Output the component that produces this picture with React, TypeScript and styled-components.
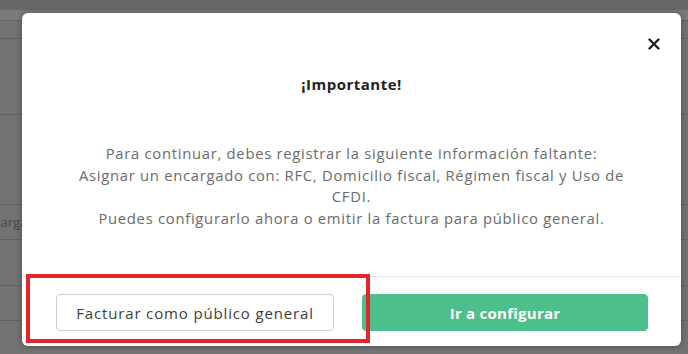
import React from 'react';
import styled, { createGlobalStyle } from 'styled-components';

const GlobalStyle = createGlobalStyle`
  html, body { margin: 0; padding: 0; }
  body { font-family: 'Open Sans', 'Liberation Sans', sans-serif; }
`;

const Page = styled.div`
  position: relative;
  width: 688px;
  height: 354px;
  overflow: hidden;
  background: #737373;
`;

const Backdrop = styled.div`
  display: flex;
  flex-direction: column;
`;

const BgRow = styled.div<{ h: number; tone?: string; plain?: boolean }>`
  height: ${(p) => p.h}px;
  box-sizing: border-box;
  background: ${(p) => p.tone || 'transparent'};
  border-bottom: ${(p) => (p.plain ? 'none' : '1px solid #616161')};
  display: flex;
  align-items: center;
  color: #474747;
  font-size: 13px;
  overflow: hidden;
`;

const Clipped = styled.span`
  margin-left: -21px;
  white-space: nowrap;
`;

const Modal = styled.div`
  position: absolute;
  left: 22px;
  top: 13px;
  width: 659px;
  height: 333px;
  background: #fff;
  border-radius: 6px;
  box-shadow: 0 0 6px rgba(0, 0, 0, 0.35);
  display: flex;
  flex-direction: column;
`;

const Header = styled.div`
  display: flex;
  justify-content: flex-end;
  padding: 25px 21px 0 0;
  height: 38px;
  box-sizing: border-box;
`;

const CloseBtn = styled.button`
  border: none;
  background: none;
  padding: 0;
  width: 12px;
  height: 12px;
  display: flex;
  cursor: pointer;
`;

const Body = styled.div`
  flex: 1;
  display: flex;
  flex-direction: column;
  align-items: center;
  text-align: center;
  padding-top: 23px;
`;

const Title = styled.h2`
  margin: 0;
  font-size: 15px;
  letter-spacing: 0.5px;
  font-weight: 700;
  color: #222;
`;

const Message = styled.p`
  margin: 49px 0 0;
  font-size: 14.8px;
  letter-spacing: 0.72px;
  line-height: 21.5px;
  color: #6b6b6b;
  width: 570px;
`;

const Footer = styled.div`
  border-top: 1px solid #e6e6e6;
  padding: 17px 33px 15px 34px;
  display: flex;
  gap: 28px;
`;

const Button = styled.button<{ primary?: boolean }>`
  height: 37px;
  border-radius: 4px;
  font-family: inherit;
  font-size: 15px;
  cursor: pointer;
  ${(p) =>
    p.primary
      ? `
    flex: 1;
    background: #4dbf8b;
    border: 1px solid #4dbf8b;
    color: #fff;
    font-weight: 700;
    letter-spacing: 0.25px;
  `
      : `
    width: 278px;
    background: #fff;
    border: 1px solid #cfcfcf;
    color: #3d3d3d;
    letter-spacing: 0.85px;
  `}
`;

const Highlight = styled.div`
  position: absolute;
  left: 26px;
  top: 274px;
  width: 344px;
  height: 69px;
  box-sizing: border-box;
  border: 4px solid #e3252d;
  pointer-events: none;
`;

const App = () => {
  return (
    <Page>
      <GlobalStyle />
      <Backdrop>
        <BgRow h={10} tone="#686868" plain />
        <BgRow h={11} tone="#7a7a7a" />
        <BgRow h={18} />
        <BgRow h={76} />
        <BgRow h={90} />
        <BgRow h={35}>
          <Clipped>Encargado</Clipped>
        </BgRow>
        <BgRow h={46} />
        <BgRow h={35} />
      </Backdrop>

      <Modal>
        <Header>
          <CloseBtn aria-label="Cerrar">
            <svg width="12" height="12" viewBox="0 0 12 12">
              <path d="M1.5 1.5 L10.5 10.5 M10.5 1.5 L1.5 10.5" stroke="#222" strokeWidth="2.4" strokeLinecap="round" />
            </svg>
          </CloseBtn>
        </Header>
        <Body>
          <Title>¡Importante!</Title>
          <Message>
            Para continuar, debes registrar la siguiente información faltante:
            <br />
            Asignar un encargado con: RFC, Domicilio fiscal, Régimen fiscal y Uso de CFDI.
            <br />
            Puedes configurarlo ahora o emitir la factura para público general.
          </Message>
        </Body>
        <Footer>
          <Button>Facturar como público general</Button>
          <Button primary>Ir a configurar</Button>
        </Footer>
      </Modal>
      <Highlight />
    </Page>
  );
};

export default App;
